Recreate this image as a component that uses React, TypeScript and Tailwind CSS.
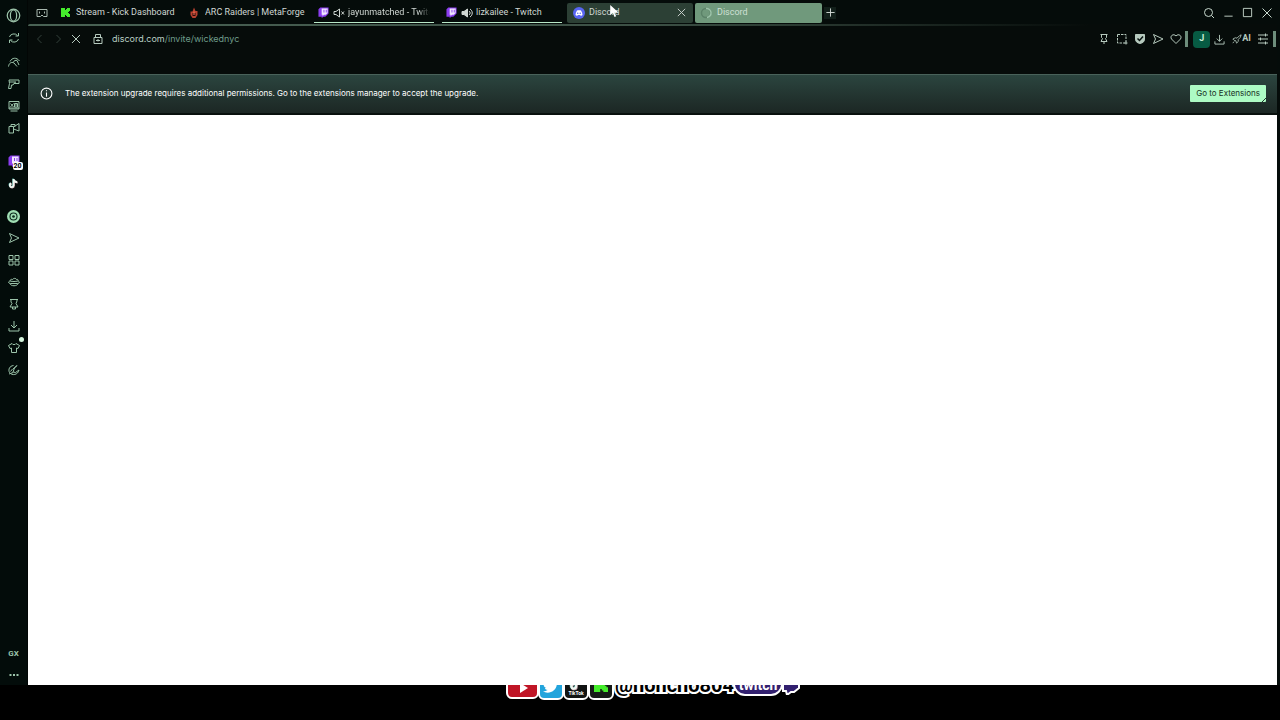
import React from "react";

type IconProps = { children: React.ReactNode; className?: string };

function Icon({ children, className = "size-3" }: IconProps) {
  return (
    <svg
      viewBox="0 0 24 24"
      fill="none"
      stroke="currentColor"
      strokeWidth="2"
      className={"shrink-0 " + className}
      aria-hidden="true"
    >
      {children}
    </svg>
  );
}

function IconButton({ label, children, className = "" }: { label: string; children: React.ReactNode; className?: string }) {
  return (
    <button type="button" aria-label={label} className={"flex shrink-0 items-center justify-center " + className}>
      {children}
    </button>
  );
}

const send = <path d="M3 3l19 9-19 9 4-9z" />;
const pin = <path d="M5 3h14M7 3v6l2 2-3 6h12l-3-6 2-2V3M12 17v5" />;
const download = <path d="M12 2v14M6 10l6 6 6-6M2 16v6h20v-6" />;

function TwitchLogo({ className = "size-3" }: { className?: string }) {
  return (
    <svg viewBox="0 0 24 24" className={"shrink-0 " + className} aria-hidden="true">
      <path d="M5 1h18v13l-7 7h-4l-4 3v-3H1V5z" fill="#8b3df0" />
      <path d="M8 3h13v10l-4 4h-4l-3 3v-3H8z" fill="#f1e6ff" />
      <path d="M12 6h2v6h-2zM17 6h2v6h-2z" fill="#8b3df0" />
    </svg>
  );
}

function DiscordLogo() {
  return (
    <svg viewBox="0 0 24 24" className="size-3 shrink-0" aria-hidden="true">
      <circle cx="12" cy="12" r="12" fill="#5865f2" />
      <path d="M8 7c2-1 6-1 8 0 2 3 3 6 3 9-1 1-3 2-4 1l-1-1h-4l-1 1c-1 1-3 0-4-1 0-3 1-6 3-9z" fill="#fff" />
      <circle cx="9.500" cy="12.500" r="1.500" fill="#5865f2" />
      <circle cx="14.500" cy="12.500" r="1.500" fill="#5865f2" />
    </svg>
  );
}

function KickLogo({ className = "size-2" }: { className?: string }) {
  return (
    <svg viewBox="0 0 9 9" className={"shrink-0 " + className} aria-hidden="true">
      <path d="M0 0h4v2h1V1h1V0h3v3H8v1H7v1h1v1h1v3H6V8H5V7H4v2H0z" fill="#45ec2c" />
    </svg>
  );
}

function TikTokLogo({ className = "size-3" }: { className?: string }) {
  return (
    <svg viewBox="0 0 24 24" fill="none" strokeWidth="4" className={"shrink-0 " + className} aria-hidden="true">
      <path d="M12 2v14a4 4 0 1 1-5-4M12 3c1 4 4 6 8 6" stroke="#3c8f86" transform="translate(-1 -1)" />
      <path d="M12 2v14a4 4 0 1 1-5-4M12 3c1 4 4 6 8 6" stroke="#c9a3ac" transform="translate(1 1)" />
      <path d="M12 2v14a4 4 0 1 1-5-4M12 3c1 4 4 6 8 6" stroke="#eef8f2" />
    </svg>
  );
}

function Tab({ icon, title, className = "" }: { icon: React.ReactNode; title: string; className?: string }) {
  return (
    <button type="button" role="tab" className={"flex h-5 shrink-0 items-center gap-1 overflow-hidden px-1 " + className}>
      {icon}
      <span className="overflow-hidden whitespace-nowrap">{title}</span>
    </button>
  );
}

function Sidebar() {
  return (
    <nav aria-label="Sidebar" className="flex w-7 shrink-0 flex-col items-center border-r border-[#020605] bg-[#030c0a] pt-1 text-[#9cc4aa]">
      <IconButton label="Opera menu" className="h-[22px]">
        <Icon className="size-[15px]">
          <circle cx="12" cy="12" r="10" />
          <ellipse cx="12" cy="12" rx="5" ry="9" />
        </Icon>
      </IconButton>
      <div className="flex flex-col pt-px">
        <IconButton label="Reload pages" className="h-[22px]">
          <Icon><path d="M3 10a9 8 0 0 1 16-3M21 2v6h-6M21 14a9 8 0 0 1-16 3M3 22v-6h6" /></Icon>
        </IconButton>
        <IconButton label="GX Control" className="h-[22px] pt-1">
          <Icon><path d="M1 21c1-7 6-10 11-7l6 7M4 11C8 3 17 2 23 10M10 13c2-4 6-5 8-4M18 9l4 9" /></Icon>
        </IconButton>
        <IconButton label="GX Games" className="h-[22px] pt-1">
          <Icon><path d="M2 4h20v7H12l-2 3H7l-1 7H1l2-10zM3 8h13M12 11l3-3" /></Icon>
        </IconButton>
        <IconButton label="Mods" className="h-[22px] pt-1">
          <Icon><path d="M2 3h20v15H2zM5 22h14M5 7l6 7M11 7l-6 7M13 7h6v7h-6zM13 10h6M2 16h20" /></Icon>
        </IconButton>
        <IconButton label="Streams" className="h-[22px] pt-1">
          <Icon><path d="M2 9h9v13H2zM6 9V5h8v4M11 10l11-7v15l-11-4" /></Icon>
        </IconButton>
      </div>
      <div className="flex flex-col pt-[13px]">
        <IconButton label="Twitch, 20 live" className="relative h-[22px]">
          <TwitchLogo />
          <span className="absolute top-3 left-[5px] rounded-xs bg-white px-px text-[7px] leading-[8px] font-bold text-black">20</span>
        </IconButton>
        <IconButton label="TikTok" className="h-[22px]"><TikTokLogo className="size-[11px]" /></IconButton>
      </div>
      <div className="flex flex-col pt-[11px]">
        <IconButton label="Player" className="h-[22px]">
          <svg viewBox="0 0 24 24" className="size-[13px]" aria-hidden="true">
            <circle cx="12" cy="12" r="12" fill="#a0dfb4" />
            <circle cx="12" cy="12" r="6.500" fill="none" stroke="#0c2a1d" strokeWidth="2" />
            <circle cx="12" cy="12" r="2.500" fill="#0c2a1d" />
          </svg>
        </IconButton>
        <IconButton label="Flow" className="h-[22px]"><Icon>{send}</Icon></IconButton>
        <IconButton label="Workspaces" className="h-[22px]">
          <Icon><path d="M2 3h8v8H2zM14 3h8v8h-8zM2 14h8v8H2zM14 14h8v8h-8z" /></Icon>
        </IconButton>
        <IconButton label="Easy files" className="h-[22px]">
          <Icon><path d="M4 10c0-3 3-4 5-3 2-3 7-3 8 0 2-1 4 1 3 3M1 12c3-3 5-1 11-1s8-2 11 1c-1 3-3 3-4 3H5c-1 0-3 0-4-3zM4 15c1 6 15 6 16 0" /></Icon>
        </IconButton>
        <IconButton label="Pinboards" className="h-[22px]">
          <Icon><path d="M4 3h16M6 3v5l2 3-4 7h16l-4-7 2-5V3M9 18v4h6v-4" /></Icon>
        </IconButton>
        <IconButton label="Downloads" className="h-[22px]"><Icon>{download}</Icon></IconButton>
        <IconButton label="GX Mods" className="relative h-[22px]">
          <Icon><path d="M8 3L1 7l3 6 3-1v9h10v-9l3 1 3-6-7-4c-1 3-7 3-8 0z" /></Icon>
          <span className="absolute top-0 left-3 size-[5px] rounded-full bg-[#d4f5de]" />
        </IconButton>
        <IconButton label="Cleaner" className="h-[22px]">
          <Icon><path d="M11 3C3 4 0 11 3 17c5 7 17 5 19-5l-7 5-5-1 3-8 5-5-8 7M5 15l4-5M2 20l8-3" /></Icon>
        </IconButton>
      </div>
      <div className="mt-auto flex flex-col text-[8px] font-bold">
        <IconButton label="GX Corner" className="h-[22px]">GX</IconButton>
        <IconButton label="More" className="h-5">
          <Icon><path d="M3 12h4M10 12h4M17 12h4" strokeWidth="4" /></Icon>
        </IconButton>
      </div>
    </nav>
  );
}

function TabBar() {
  return (
    <header className="flex h-6 shrink-0 items-center pt-px pr-[7px]">
      <IconButton label="Tab overview" className="ml-2 text-[#a9b8af]">
        <Icon>
          <path d="M2 5h20v14h-7l-3-3-3 3H2z" />
          <path d="M7 9v4M17 9v4" />
        </Icon>
      </IconButton>
      <div role="tablist" className="ml-2 flex min-w-0 items-end text-[9px] text-[#d0d7d3]">
        <Tab className="w-[128px] gap-[6px] pl-[5px]" icon={<KickLogo className="size-[9px]" />} title="Stream - Kick Dashboard" />
        <Tab
          className="w-[126px]"
          icon={
            <svg viewBox="0 0 24 24" className="mr-px size-3 shrink-0" aria-hidden="true">
              <path d="M12 1l3 7h4v8l-4 6H9l-4-6V9h4z" fill="#b8402f" />
              <path d="M9 12h6v6H9z" fill="#2a0c0a" />
              <path d="M12 9v7" stroke="#ff7a5c" strokeWidth="2" />
            </svg>
          }
          title="ARC Raiders | MetaForge"
        />
        <Tab
          className="ml-1 w-[120px] border-b border-[#b9e8c8] pt-px [&>span]:mask-r-from-85%"
          icon={
            <>
              <TwitchLogo className="size-[11px]" />
              <Icon className="-mr-px size-3"><path d="M2 9h4l7-5v16l-7-5H2zM17 9l5 6M22 9l-5 6" /></Icon>
            </>
          }
          title="jayunmatched - Twitch"
        />
        <Tab
          className="ml-2 w-[120px] border-b border-[#b9e8c8] pt-px"
          icon={
            <>
              <TwitchLogo className="size-[11px]" />
              <Icon className="-mr-px size-3"><path d="M2 9h4l7-5v16l-7-5H2z" fill="currentColor" /><path d="M16 8c3 2 3 6 0 8M18 4c6 4 6 12 0 16" /></Icon>
            </>
          }
          title="lizkailee - Twitch"
        />
        <div className="relative ml-[5px] flex h-5 w-[126px] shrink-0 items-center rounded-xs bg-[#2c4035] pr-[6px]">
          <Tab className="flex-1 pl-[6px]" icon={<DiscordLogo />} title="Discord" />
          <IconButton label="Close tab">
            <Icon className="size-[11px]"><path d="M4 4l16 16M20 4L4 20" /></Icon>
          </IconButton>
          <svg viewBox="0 0 10 14" className="absolute top-[2px] left-[43px] h-3 w-[9px]" aria-hidden="true">
            <path d="M0 0v12l3-3 2 5 2-1-2-4h5z" fill="#fff" />
          </svg>
        </div>
        <Tab
          className="ml-[2px] w-[127px] rounded-xs bg-[#70997c] pl-[5px] text-[#cfe0d5]"
          icon={
            <Icon className="mr-px size-3">
              <circle cx="12" cy="12" r="9" stroke="#5b8268" strokeWidth="3" />
              <path d="M12 3a9 9 0 0 1 2 18" stroke="#9cc3a9" strokeWidth="3" />
            </Icon>
          }
          title="Discord"
        />
      </div>
      <IconButton label="New tab" className="ml-[2px] size-3 bg-[#121f1a] text-[#d7ddd9]">
        <Icon className="size-[11px]"><path d="M12 3v18M3 12h18" /></Icon>
      </IconButton>
      <div className="ml-auto flex items-center gap-2 text-[#c7d8cd]">
        <IconButton label="Search tabs"><Icon className="size-3"><circle cx="11" cy="11" r="8" /><path d="M17 17l5 5" /></Icon></IconButton>
        <IconButton label="Minimize"><Icon className="size-[11px]"><path d="M3 20h18" /></Icon></IconButton>
        <IconButton label="Maximize"><Icon className="size-[11px]"><path d="M3 3h18v18H3z" /></Icon></IconButton>
        <IconButton label="Close window"><Icon className="size-3"><path d="M3 3l18 18M21 3L3 21" /></Icon></IconButton>
      </div>
    </header>
  );
}

function AddressBar() {
  return (
    <div className="flex h-[26px] shrink-0 items-center pr-px text-[#b6cabe]">
      <div className="flex items-center gap-[6px] pl-[6px]">
        <IconButton label="Back" className="text-[#33413b]"><Icon><path d="M15 4l-8 8 8 8" /></Icon></IconButton>
        <IconButton label="Forward" className="text-[#33413b]"><Icon><path d="M9 4l8 8-8 8" /></Icon></IconButton>
        <IconButton label="Stop loading"><Icon><path d="M4 4l16 16M20 4L4 20" /></Icon></IconButton>
      </div>
      <Icon className="ml-[10px] size-3"><path d="M4 9h16v12H4zM7 9V3h10v6M12 12v5M8 15h8" /></Icon>
      <a href="https://discord.com/invite/wickednyc" className="ml-2 font-['Inter',sans-serif] text-[9px] text-[#6f9c8b]">
        <span className="text-[#b9cfc4]">discord.com</span>/invite/wickednyc
      </a>
      <div className="ml-auto flex items-center gap-[6px]">
        <IconButton label="Pin page"><Icon className="size-3">{pin}</Icon></IconButton>
        <IconButton label="Snapshot">
          <Icon className="size-3"><path d="M3 3h17v15M3 3v17h15" strokeDasharray="5 2" /><path d="M20 17v6M17 20h6" /></Icon>
        </IconButton>
        <IconButton label="Ad blocker">
          <Icon className="size-3"><path d="M3 3h18v9c0 6-4 8-9 9-5-1-9-3-9-9z" fill="currentColor" /><path d="M7 11l4 4 7-8" stroke="#0b1613" strokeWidth="3" /></Icon>
        </IconButton>
        <IconButton label="Send page"><Icon className="size-3">{send}</Icon></IconButton>
        <IconButton label="Bookmark"><Icon className="size-3"><path d="M12 21L3 12C-1 6 7 0 12 6c5-6 13 0 9 6z" /></Icon></IconButton>
      </div>
      <span className="ml-[3px] h-4 w-[3px] bg-[#6d8d7b]" />
      <IconButton label="Profile" className="ml-[5px] size-[17px] rounded-sm bg-[#075b43] text-[9px] font-bold text-[#c9eed7]">J</IconButton>
      <IconButton label="Downloads" className="ml-1"><Icon className="size-[11px]">{download}</Icon></IconButton>
      <IconButton label="Aria AI" className="ml-[7px] text-[9px] font-bold">
        <Icon className="size-[10px]"><path d="M2 12l6-3 4 1 6-6 4-2-2 6-5 5v5l-4 4-2-6-4-1zM5 18l-3 4" /></Icon>AI
      </IconButton>
      <IconButton label="Easy setup" className="ml-[6px]"><Icon><path d="M2 4h20M2 12h20M2 20h20M17 1v6M7 9v6M17 17v6" /></Icon></IconButton>
      <span className="ml-1 h-4 w-[3px] bg-[#6d8d7b]" />
    </div>
  );
}

function Notice() {
  return (
    <div role="status" className="flex h-[41px] shrink-0 items-center border-t border-b-2 border-t-[#49625a] border-b-[#08100d] bg-linear-to-b from-[#2b453f] to-[#1c2724] pr-[11px] pb-[2px] pl-3 font-['Inter',sans-serif] text-white">
      <Icon className="size-[13px]"><circle cx="12" cy="12" r="10" /><path d="M12 10v8M12 6v2" /></Icon>
      <p className="ml-3 text-[8px]">
        The extension upgrade requires additional permissions. Go to the extensions manager to accept the upgrade.
      </p>
      <button type="button" className="relative ml-auto h-[17px] rounded-[1px] bg-[#adfbc4] px-[6px] text-[8px] whitespace-nowrap text-[#173024]">
        Go to Extensions
        <svg viewBox="0 0 4 4" className="absolute right-0 bottom-0 size-1" aria-hidden="true"><path d="M4 0L0 4" stroke="#20382e" /></svg>
      </button>
    </div>
  );
}

function Badge({ className, children }: { className: string; children: React.ReactNode }) {
  return (
    <span className={"flex flex-col items-center justify-center rounded-md border-2 border-white " + className}>
      {children}
    </span>
  );
}

function StreamBanner() {
  return (
    <footer className="flex h-[35px] shrink-0 items-start justify-center overflow-hidden bg-black">
      <div className="-mt-3 ml-[26px] flex items-start">
        <Badge className="h-[26px] w-[33px] bg-[#c01526]">
          <svg viewBox="0 0 10 10" className="mt-1 size-[10px]" aria-hidden="true"><path d="M2 0l8 5-8 5z" fill="#fff" /></svg>
        </Badge>
        <Badge className="-ml-px h-[27px] w-[26px] bg-[#22a4dc]">
          <svg viewBox="0 0 24 24" className="mb-px size-4" aria-hidden="true">
            <path d="M23 5l-2 2c0 9-6 15-14 15-3 0-5-1-7-2 3 0 5-1 7-2-2 0-4-1-4-3h2c-3-1-4-3-4-5l2 1C1 9 1 6 2 4c3 3 6 5 10 5-1-5 5-8 8-4l3-1-2 3z" fill="#fff" />
          </svg>
        </Badge>
        <Badge className="-ml-px h-[27px] w-[26px] bg-[#111312]">
          <TikTokLogo className="size-[14px]" />
          <span className="text-[5px] leading-[5px] font-bold text-white">TikTok</span>
        </Badge>
        <Badge className="-ml-px h-[27px] w-[26px] bg-[#171b19] pb-1">
          <KickLogo className="size-[14px]" />
        </Badge>
        <span className="ml-px text-[20px] leading-6 font-bold text-black [-webkit-text-stroke:4px_white] [paint-order:stroke]">
          @honcho804
        </span>
        <span className="-ml-px flex h-[23px] w-[50px] items-center justify-center rounded-b-xl border-2 border-white bg-[#32206f] text-[14px] leading-5 font-bold text-white">
          twitch
        </span>
        <svg viewBox="0 0 18 22" className="-ml-px h-[22px] w-[18px]" aria-hidden="true">
          <path d="M1 1h16v14l-5 4H9l-4 3-1-4H1z" fill="#32206f" stroke="#fff" strokeWidth="2" />
        </svg>
      </div>
    </footer>
  );
}

export default function App() {
  return (
    <div className="flex min-h-screen flex-col bg-black font-['Roboto',sans-serif]">
      <div className="flex flex-1 bg-[#050c0a]">
        <Sidebar />
        <div className="flex min-w-0 flex-1 flex-col">
          <TabBar />
          <div className="mr-[3px] flex flex-1 flex-col rounded-tl-sm bg-[#060c0a]">
            <div className="h-[2px] rounded-tl-sm bg-linear-to-r from-[#4a6355] via-[#3c5045] to-transparent to-85%" />
            <AddressBar />
            <div className="h-[22px]" />
            <Notice />
            <main className="flex-1 bg-white" />
          </div>
        </div>
      </div>
      <StreamBanner />
    </div>
  );
}
